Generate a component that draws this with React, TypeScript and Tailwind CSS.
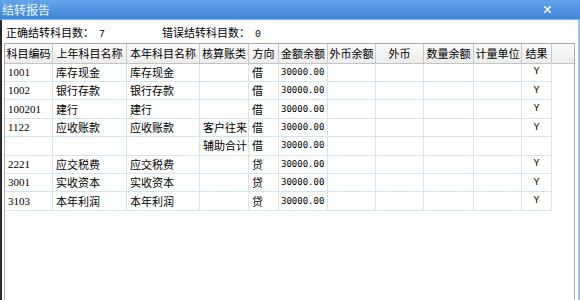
import { X } from "lucide-react";

const COLS = [48, 74, 73, 49, 30, 49, 48, 48, 50, 48, 30];
const HEADERS = ["科目编码", "上年科目名称", "本年科目名称", "核算账类", "方向", "金额余额", "外币余额", "外币", "数量余额", "计量单位", "结果"];

interface Row {
  code: string;
  prev: string;
  curr: string;
  kind: string;
  dir: string;
  amount: string;
  result: string;
}

const ROWS: Row[] = [
  { code: "1001", prev: "库存现金", curr: "库存现金", kind: "", dir: "借", amount: "30000.00", result: "Y" },
  { code: "1002", prev: "银行存款", curr: "银行存款", kind: "", dir: "借", amount: "30000.00", result: "Y" },
  { code: "100201", prev: "建行", curr: "建行", kind: "", dir: "借", amount: "30000.00", result: "Y" },
  { code: "1122", prev: "应收账款", curr: "应收账款", kind: "客户往来", dir: "借", amount: "30000.00", result: "Y" },
  { code: "", prev: "", curr: "", kind: "辅助合计", dir: "借", amount: "30000.00", result: "" },
  { code: "2221", prev: "应交税费", curr: "应交税费", kind: "", dir: "贷", amount: "30000.00", result: "Y" },
  { code: "3001", prev: "实收资本", curr: "实收资本", kind: "", dir: "贷", amount: "30000.00", result: "Y" },
  { code: "3103", prev: "本年利润", curr: "本年利润", kind: "", dir: "贷", amount: "30000.00", result: "Y" },
];

const serifNum = "font-['Liberation_Serif',serif] text-[11px]";
const amountFont = "font-['DejaVu_Sans_Mono',monospace] text-[9px]";
const yFont = "font-['Liberation_Mono',monospace] text-[10px]";

function Cell({ w, children, className = "" }: { w: number; children?: React.ReactNode; className?: string }) {
  return (
    <div
      className={`flex h-[18.4px] shrink-0 items-center overflow-hidden whitespace-nowrap border-r border-b border-[#d5e2f3] px-[3px] ${className}`}
      style={{ width: w }}
    >
      {children}
    </div>
  );
}

export default function App() {
  return (
    <div className="flex h-[300px] w-[580px] flex-col overflow-hidden bg-white font-['Noto_Sans_CJK_SC',sans-serif] text-[11px] text-black">
      {/* Title bar */}
      <div className="flex h-[20px] shrink-0 items-center justify-between border-b border-[#7fb2ec] bg-gradient-to-b from-[#62a5ea] to-[#3f86d8] pl-[2px] pr-[27px]">
        <span className="text-[12px] leading-none text-white/90">结转报告</span>
        <X className="h-[11px] w-[11px] text-white" strokeWidth={3.5} />
      </div>

      <div className="flex min-h-0 flex-1 flex-col border-l-2 border-r-2 border-l-[#2a2a2a] border-r-[#9fc2ee] pr-[3px]">
        {/* Summary */}
        <div className="flex h-[23px] shrink-0 items-center pl-[4px] pt-[4px] leading-none">
          <span className="w-[156px]">
            正确结转科目数：<span className={`ml-[5px] ${yFont}`}>7</span>
          </span>
          <span>
            错误结转科目数：<span className={`ml-[5px] ${yFont}`}>0</span>
          </span>
        </div>

        {/* Grid panel */}
        <div className="ml-[2px] flex-1 border border-b-0 border-[#a8a8a8]">
          <div className="flex h-[19.7px] border-b border-[#c4c4c4] bg-gradient-to-b from-[#fbfbfb] to-[#ececec]">
            {HEADERS.map((h, i) => (
              <div
                key={h}
                className="flex shrink-0 items-center justify-center whitespace-nowrap border-r border-[#c8c8c8] leading-none"
                style={{ width: COLS[i] }}
              >
                {h}
              </div>
            ))}
            <div className="flex-1" />
          </div>

          {ROWS.map((r, idx) => (
            <div key={idx} className="flex leading-none">
              <Cell w={COLS[0]} className={serifNum}>{r.code}</Cell>
              <Cell w={COLS[1]}>{r.prev}</Cell>
              <Cell w={COLS[2]}>{r.curr}</Cell>
              <Cell w={COLS[3]}>{r.kind}</Cell>
              <Cell w={COLS[4]}>{r.dir}</Cell>
              <Cell w={COLS[5]} className={`pl-[2px] ${amountFont}`}>{r.amount}</Cell>
              <Cell w={COLS[6]} />
              <Cell w={COLS[7]} />
              <Cell w={COLS[8]} />
              <Cell w={COLS[9]} />
              <Cell w={COLS[10]} className={`justify-center ${yFont}`}>{r.result}</Cell>
            </div>
          ))}
        </div>
      </div>
    </div>
  );
}
